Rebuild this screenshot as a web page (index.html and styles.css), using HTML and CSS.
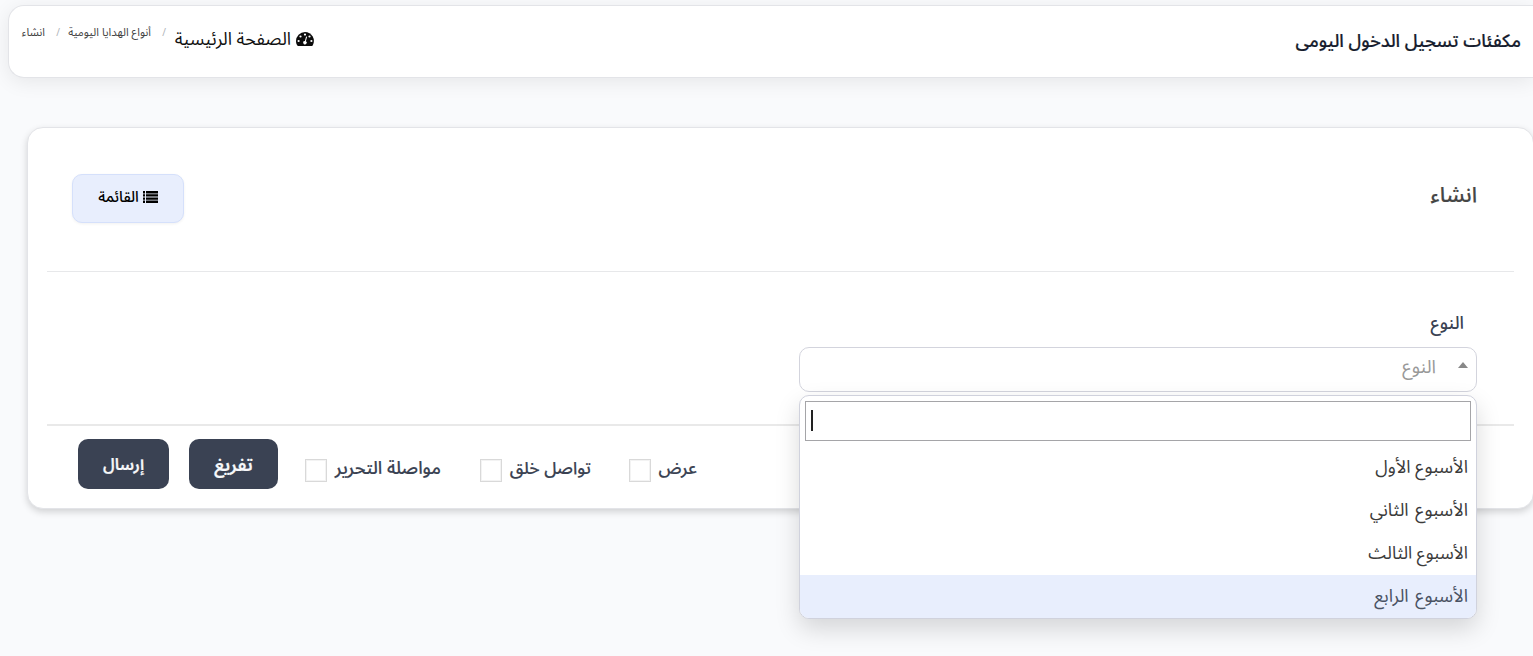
FILE: index.html
```html
<!DOCTYPE html>
<html lang="ar" dir="rtl">
<head>
<meta charset="utf-8">
<title>مكفئات تسجيل الدخول اليومى</title>
<link rel="stylesheet" href="styles.css">
</head>
<body>
<header class="topbar">
  <h1 class="page-title">مكفئات تسجيل الدخول اليومى</h1>
  <nav class="breadcrumb">
    <a class="crumb-home"><svg class="gauge" viewBox="0 0 18 14"><path fill="#0b0b0b" d="M9 0a9 9 0 0 0-9 9c0 1.700.5 3.200 1.300 4.500.2.300.4.500.8.500h13.800c.4 0 .6-.2.800-.5A9 9 0 0 0 9 0z"/><g fill="#fff"><circle cx="9" cy="2.600" r="1.100"/><circle cx="4.500" cy="4.500" r="1.100"/><circle cx="2.600" cy="9" r="1.100"/><circle cx="15.400" cy="9" r="1.100"/><circle cx="13.500" cy="4.500" r="1.100"/><path d="M10.100 4.500l1 .3-1.200 4.500a1.700 1.700 0 1 1-1-.3z"/></g></svg><span>الصفحة الرئيسية</span></a>
    <span class="slash">/</span>
    <a class="crumb crumb-types">أنواع الهدايا اليومية</a>
    <span class="slash">/</span>
    <span class="crumb crumb-create">انشاء</span>
  </nav>
</header>
<main class="card">
  <div class="card-head">
    <h2 class="card-title">انشاء</h2>
    <a class="list-btn"><svg class="list-icon" viewBox="0 0 15 12"><path d="M0 0h2v2.400H0zM3 0h12v2.400H3zM0 3.200h2v2.400H0zM3 3.200h12v2.400H3zM0 6.400h2v2.400H0zM3 6.400h12v2.400H3zM0 9.600h2V12H0zM3 9.600h12V12H3z"/></svg><span>القائمة</span></a>
  </div>
  <div class="card-body">
    <label class="field-label">النوع</label>
    <div class="select">
      <div class="select-box"><i class="caret"></i><span class="placeholder">النوع</span></div>
      <div class="dropdown">
        <div class="search"><i class="cursor"></i></div>
        <ul class="options">
          <li>الأسبوع الأول</li>
          <li class="opt-second">الأسبوع الثاني</li>
          <li class="opt-third">الأسبوع الثالث</li>
          <li class="active">الأسبوع الرابع</li>
        </ul>
      </div>
    </div>
  </div>
  <footer class="card-foot">
    <label class="check check-view"><span>عرض</span><i class="box"></i></label>
    <label class="check check-create"><span>تواصل خلق</span><i class="box"></i></label>
    <label class="check check-edit"><span>مواصلة التحرير</span><i class="box"></i></label>
    <button class="btn btn-reset">تفريغ</button>
    <button class="btn btn-submit">إرسال</button>
  </footer>
</main>
</body>
</html>
```
FILE: styles.css
```css
* { box-sizing: border-box; }
body {
  margin: 0;
  padding: 5px 0 0;
  height: 656px;
  overflow: hidden;
  background: #f9fafc;
  font-family: "Noto Sans Arabic", "DejaVu Sans", sans-serif;
  color: #3a4252;
  white-space: nowrap;
}
h1, h2, ul { margin: 0; padding: 0; }
.topbar {
  display: flex;
  justify-content: space-between;
  height: 73px;
  margin-left: 8px;
  padding: 0 12px 0 13px;
  background: #fff;
  border: 1px solid #e3e4e8;
  border-right: 0;
  border-radius: 16px 0 0 16px;
  box-shadow: 0 4px 20px rgba(0, 0, 0, .08);
}
.page-title { font-size: 18px; font-weight: 500; line-height: 70px; color: #161c2d; -webkit-text-stroke: .2px #161c2d; }
.breadcrumb { display: flex; align-items: flex-start; }
.crumb-home { display: flex; align-items: center; gap: 5px; width: 140px; height: 66px; font-size: 17.800px; color: #111; margin-left: 1px; }
.gauge { width: 18px; height: 14px; flex: none; }
.slash { width: 22px; padding-right: 7px; font-size: 10px; line-height: 54px; color: #b0b3b8; }
.crumb { font-size: 11.300px; line-height: 53px; color: #444; }
.crumb-types { width: 84px; }
.crumb-create { width: 23px; }
.card {
  height: 382px;
  margin: 49px -1px 0 0;
  width: 1507px;
  background: #fff;
  border: 1px solid #e3e4e8;
  border-radius: 16px;
  box-shadow: 0 3px 7px rgba(0, 0, 0, .16);
}
.card-head {
  display: flex;
  justify-content: space-between;
  height: 144px;
  margin: 0 19px;
  padding: 46px 37px 0 25px;
  border-bottom: 1px solid #e7e8ea;
}
.card-title { font-size: 21.500px; font-weight: 500; line-height: 43px; color: #464646; -webkit-text-stroke: .15px #464646; }
.list-btn {
  display: flex;
  align-items: center;
  justify-content: center;
  gap: 4px;
  width: 112px;
  height: 49px;
  padding-bottom: 3px;
  background: #e8eefd;
  border: 1px solid #d5e0fb;
  border-radius: 10px;
  box-shadow: 0 1px 3px rgba(0, 0, 0, .06);
  font-size: 15px;
  font-weight: 500;
  color: #000;
}
.list-icon { width: 15px; height: 12px; flex: none; }
.card-body { height: 154px; margin: 0 19px; padding: 35px 37px 0 0; border-bottom: 2px solid #e9e9e9; }
.field-label { display: block; height: 40px; padding-right: 13px; font-size: 17.800px; font-weight: 500; line-height: 34px; }
.select { position: relative; width: 678px; }
.select-box {
  display: flex;
  height: 45px;
  padding-right: 8px;
  background: #fff;
  border: 1px solid #d3d4dd;
  border-radius: 10px;
}
.caret { width: 10px; height: 6px; margin-top: 14px; background: #888; clip-path: polygon(50% 0, 100% 100%, 0 100%); }
.placeholder { margin-right: 22px; font-size: 18.500px; line-height: 40px; color: #999; }
.dropdown {
  position: absolute;
  top: 48px;
  right: 0;
  z-index: 2;
  width: 678px;
  height: 224px;
  background: #fff;
  border: 1px solid #d0d2dd;
  border-radius: 10px;
  overflow: hidden;
  box-shadow: 0 10px 25px rgba(0, 0, 0, .15);
}
.search { display: flex; align-items: center; justify-content: flex-end; height: 40px; margin: 5px 5px; padding: 0 0 2px 5px; border: 1px solid #a5a5a8; }
.cursor { width: 2px; height: 21px; background: #222; }
.options { list-style: none; }
.options li { height: 43px; padding-right: 8px; font-size: 18px; line-height: 42px; color: #3b3b3b; }
.options .opt-second { word-spacing: 2px; }
.options .opt-third { font-size: 17.500px; line-height: 43px; }
.options li.active { background: #e8eefd; color: #4a5263; word-spacing: 2px; }
.card-foot { display: flex; height: 83px; padding: 13px 0 0 50px; justify-content: flex-end; }
.check { display: flex; justify-content: space-between; padding-top: 20px; height: 44px; font-size: 17.200px; font-weight: 500; line-height: 20px; -webkit-text-stroke: .15px #3a4252; }
.check-view { width: 68px; margin-left: 38px; }
.check-create { width: 111px; margin-left: 39px; }
.check-edit { width: 136px; margin-left: 27px; font-size: 17.900px; line-height: 19px; }
.box { width: 22px; height: 23px; flex: none; background: #fff; border: 1px solid #d9d9d9; box-shadow: inset 0 0 0 1px #f3f3f3; }
.btn {
  height: 50px;
  padding: 1px 0 0;
  background: #3a4253;
  border: 0;
  border-radius: 10px;
  font-family: inherit;
  font-weight: 600;
  color: #f6f7f9;
  -webkit-text-stroke: .2px #f6f7f9;
}
.btn-reset { width: 89px; margin-left: 20px; font-size: 18px; }
.btn-submit { width: 91px; font-size: 16.200px; }
```
